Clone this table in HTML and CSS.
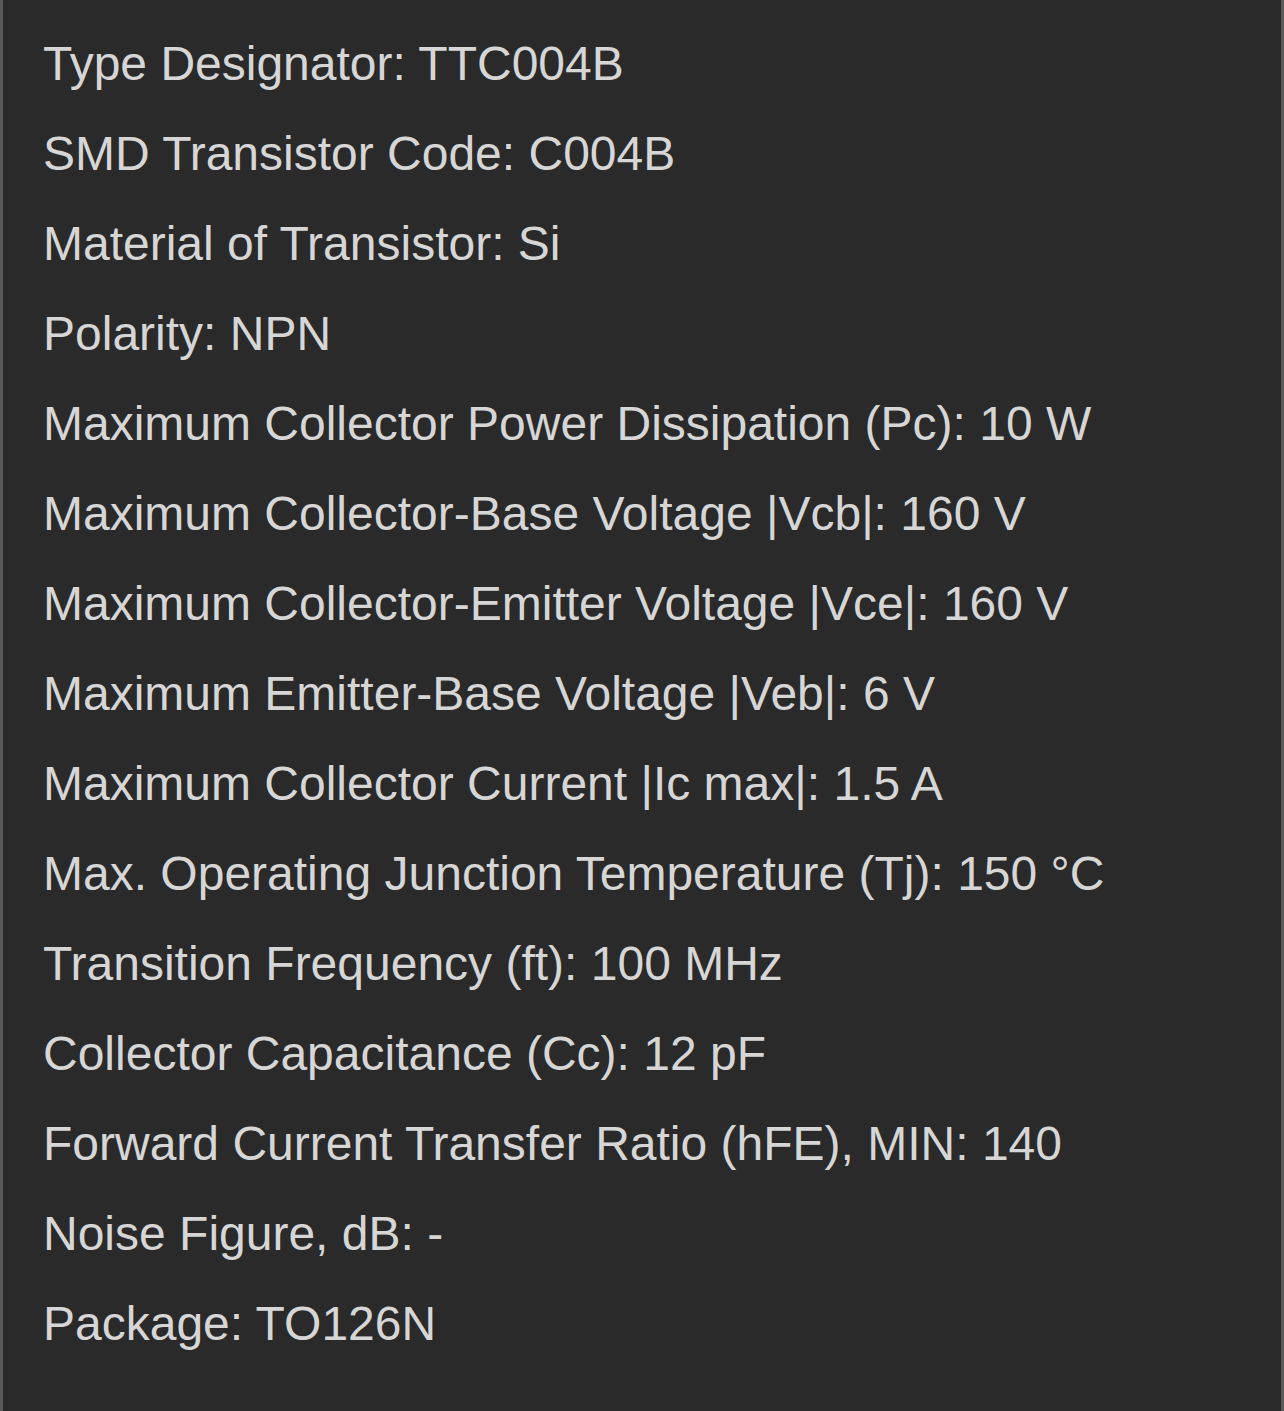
FILE: index.html
```html
<!DOCTYPE html>
<html lang="en">
<head>
    <meta charset="UTF-8">
    <meta name="viewport" content="width=device-width, initial-scale=1.0">
    <title>TTC004B</title>
    <link rel="stylesheet" href="styles.css">
</head>
<body>
    <div class="specs">
        <p>Type Designator: TTC004B</p>
        <p>SMD Transistor Code: C004B</p>
        <p>Material of Transistor: Si</p>
        <p>Polarity: NPN</p>
        <p>Maximum Collector Power Dissipation (Pc): 10 W</p>
        <p>Maximum Collector-Base Voltage |Vcb|: 160 V</p>
        <p>Maximum Collector-Emitter Voltage |Vce|: 160 V</p>
        <p>Maximum Emitter-Base Voltage |Veb|: 6 V</p>
        <p>Maximum Collector Current |Ic max|: 1.5 A</p>
        <p>Max. Operating Junction Temperature (Tj): 150 °C</p>
        <p>Transition Frequency (ft): 100 MHz</p>
        <p>Collector Capacitance (Cc): 12 pF</p>
        <p>Forward Current Transfer Ratio (hFE), MIN: 140</p>
        <p>Noise Figure, dB: -</p>
        <p>Package: TO126N</p>
    </div>
</body>
</html>
```

FILE: styles.css
```css
body {
    margin: 0;
    background-color: #2a2a2a;
    font-family: "Liberation Sans", Arial, sans-serif;
}

.specs {
    min-height: 1411px;
    box-sizing: border-box;
    padding: 19px 40px 0 40px;
    background-color: #2a2a2a;
    border-left: 3px solid #5a5a5a;
    border-right: 3px solid #5a5a5a;
    color: #d6d6d6;
}

.specs p {
    margin: 0;
    font-size: 48px;
    line-height: 90px;
    white-space: nowrap;
}
```
